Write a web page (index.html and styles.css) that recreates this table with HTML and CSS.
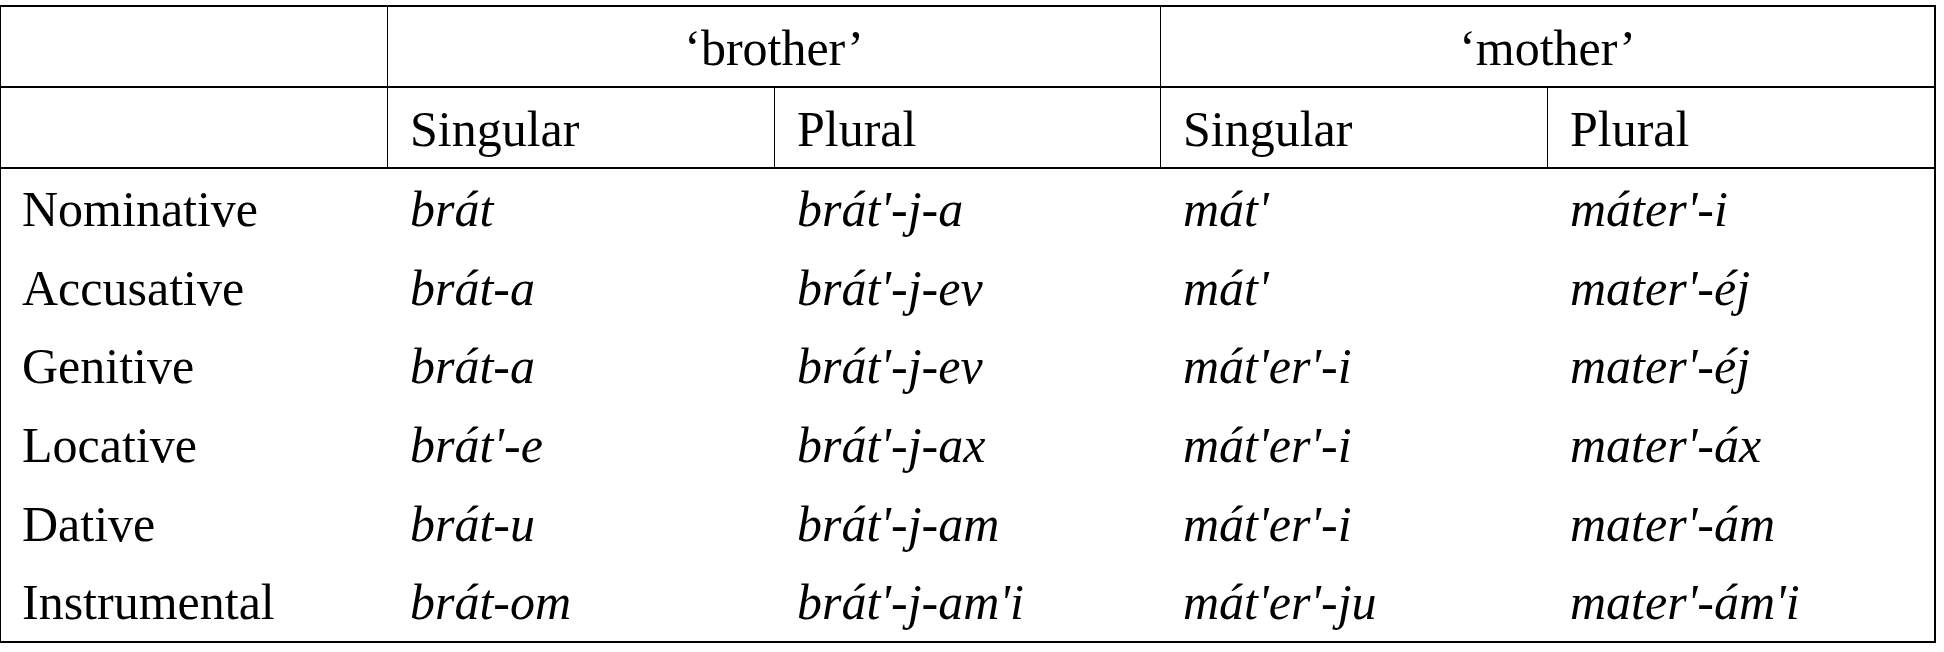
FILE: index.html
```html
<!DOCTYPE html>
<html lang="en">
<head>
<meta charset="utf-8">
<title>Declension table</title>
<link rel="stylesheet" href="styles.css">
</head>
<body>
<table class="paradigm">
  <colgroup>
    <col class="c-label">
    <col class="c-a">
    <col class="c-b">
    <col class="c-a">
    <col class="c-a">
  </colgroup>
  <thead>
    <tr class="head-row">
      <th class="label"></th>
      <th class="group" colspan="2">‘brother’</th>
      <th class="group" colspan="2">‘mother’</th>
    </tr>
    <tr class="head-row">
      <th class="label"></th>
      <th>Singular</th>
      <th>Plural</th>
      <th>Singular</th>
      <th>Plural</th>
    </tr>
  </thead>
  <tbody>
    <tr>
      <th class="label">Nominative</th>
      <td>brát</td>
      <td>brát'-j-a</td>
      <td>mát'</td>
      <td>máter'-i</td>
    </tr>
    <tr>
      <th class="label">Accusative</th>
      <td>brát-a</td>
      <td>brát'-j-ev</td>
      <td>mát'</td>
      <td>mater'-éj</td>
    </tr>
    <tr>
      <th class="label">Genitive</th>
      <td>brát-a</td>
      <td>brát'-j-ev</td>
      <td>mát'er'-i</td>
      <td>mater'-éj</td>
    </tr>
    <tr>
      <th class="label">Locative</th>
      <td>brát'-e</td>
      <td>brát'-j-ax</td>
      <td>mát'er'-i</td>
      <td>mater'-áx</td>
    </tr>
    <tr>
      <th class="label">Dative</th>
      <td>brát-u</td>
      <td>brát'-j-am</td>
      <td>mát'er'-i</td>
      <td>mater'-ám</td>
    </tr>
    <tr>
      <th class="label">Instrumental</th>
      <td>brát-om</td>
      <td>brát'-j-am'i</td>
      <td>mát'er'-ju</td>
      <td>mater'-ám'i</td>
    </tr>
  </tbody>
</table>
</body>
</html>
```
FILE: styles.css
```css
html, body {
  margin: 0;
  padding: 0;
  background: #ffffff;
}

body {
  font-family: "Liberation Serif", "Times New Roman", serif;
  color: #000000;
}

.paradigm {
  margin-top: 5px;
  border-collapse: separate;
  border-spacing: 0;
  table-layout: fixed;
  width: 1936px;
  border-top: 2px solid #000;
  border-right: 2px solid #000;
  border-bottom: 2px solid #000;
  border-left: 1px solid #000;
  font-size: 50px;
}

.c-label { width: 386px; }
.c-a { width: 387px; }
.c-b { width: 386px; }

.paradigm th,
.paradigm td {
  font-weight: normal;
  text-align: left;
  vertical-align: top;
  white-space: nowrap;
  padding: 3px 0 0 22px;
  border-left: 1px solid transparent;
}

.paradigm th.label {
  padding-left: 21px;
  border-left: 0;
}

.head-row th {
  line-height: 76px;
  border-bottom: 2px solid #000;
}

.head-row th:not(.label) {
  border-left-color: #000;
}

.head-row th.group {
  text-align: center;
  padding-left: 0;
}

tbody th,
tbody td {
  line-height: 75.67px;
}

tbody td {
  font-style: italic;
}
```
